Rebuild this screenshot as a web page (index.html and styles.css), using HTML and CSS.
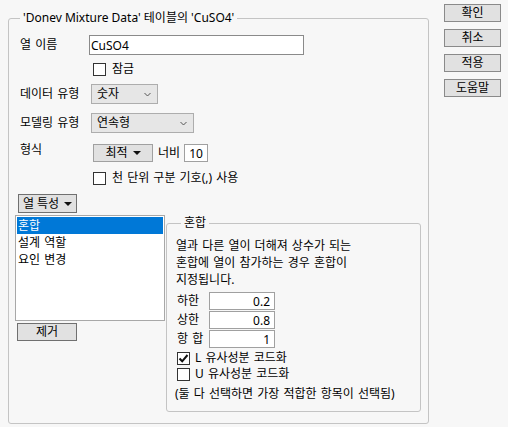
FILE: index.html
```html
<!DOCTYPE html>
<html lang="ko">
<head>
    <meta charset="UTF-8">
    <title>열 정보</title>
    <link rel="stylesheet" href="styles.css">
</head>
<body>
    <div class="dialog">
        <fieldset class="main">
            <legend>'Donev Mixture Data' 테이블의 'CuSO4'</legend>

            <div class="row row-name">
                <span class="label">열 이름</span>
                <input class="text-input name-input" type="text" value="CuSO4">
            </div>
            <div class="row row-lock">
                <span class="label"></span>
                <label class="check"><span class="box"></span>잠금</label>
            </div>
            <div class="row row-type">
                <span class="label">데이터 유형</span>
                <div class="select sel-data">숫자<span class="chev"><svg width="7" height="5" viewBox="0 0 7 5"><path d="M0.5 1 L3.5 4 L6.5 1" fill="none" stroke="#555" stroke-width="1"/></svg></span></div>
            </div>
            <div class="row row-model">
                <span class="label">모델링 유형</span>
                <div class="select sel-model">연속형<span class="chev"><svg width="7" height="5" viewBox="0 0 7 5"><path d="M0.5 1 L3.5 4 L6.5 1" fill="none" stroke="#555" stroke-width="1"/></svg></span></div>
            </div>
            <div class="row row-format">
                <span class="label label-top">형식</span>
                <button class="btn drop-btn fmt-btn">최적 <span class="tri"></span></button>
                <span class="width-label">너비</span>
                <input class="text-input width-input" type="text" value="10">
            </div>
            <div class="row row-sep">
                <span class="label"></span>
                <label class="check"><span class="box"></span>천 단위 구분 기호(,) 사용</label>
            </div>

            <button class="btn drop-btn prop-btn">열 특성 <span class="tri"></span></button>

            <div class="props">
                <div class="prop-side">
                    <ul class="prop-list">
                        <li class="selected">혼합</li>
                        <li>설계 역할</li>
                        <li>요인 변경</li>
                    </ul>
                    <button class="btn remove-btn">제거</button>
                </div>

                <fieldset class="mix">
                    <legend>혼합</legend>
                    <p class="mix-desc">열과 다른 열이 더해져 상수가 되는<br>혼합에 열이 참가하는 경우 혼합이<br>지정됩니다.</p>
                    <div class="limits">
                        <span>하한</span><input class="num-input" type="text" value="0.2">
                        <span>상한</span><input class="num-input" type="text" value="0.8">
                        <span>항 합</span><input class="num-input" type="text" value="1">
                    </div>
                    <label class="check mix-check"><span class="box checked"><svg width="11" height="11" viewBox="0 0 11 11"><path d="M1.5 5.5 L4.2 8.3 L9.5 2" fill="none" stroke="#111" stroke-width="2"/></svg></span>L 유사성분 코드화</label>
                    <label class="check mix-check"><span class="box"></span>U 유사성분 코드화</label>
                    <p class="mix-note">(둘 다 선택하면 가장 적합한 항목이 선택됨)</p>
                </fieldset>
            </div>
        </fieldset>

        <div class="actions">
            <button class="btn act-btn">확인</button>
            <button class="btn act-btn">취소</button>
            <button class="btn act-btn">적용</button>
            <button class="btn act-btn">도움말</button>
        </div>
    </div>
</body>
</html>
```

FILE: styles.css
```css
* {
    box-sizing: border-box;
    margin: 0;
    padding: 0;
}

body {
    font-family: "Noto Sans", "Noto Sans CJK KR", sans-serif;
    font-size: 12px;
    line-height: 16px;
    word-spacing: 1px;
    color: #000;
    background: #f7f7f7;
    width: 508px;
    height: 427px;
    overflow: hidden;
}

.dialog {
    display: flex;
    align-items: flex-start;
    padding: 10px 0 0 8px;
}

fieldset {
    border: 1px solid #c4c4c4;
    border-radius: 3px;
}

legend {
    padding: 0 3px;
    margin-left: 5px;
    line-height: 16px;
    word-spacing: 0;
}

.main {
    width: 421px;
    height: 414px;
    padding: 9px 7px 0 6px;
}

.actions {
    display: flex;
    flex-direction: column;
    gap: 7px;
    margin: -6px 0 0 15px;
}

.btn {
    font: inherit;
    color: #000;
    background: #e1e1e1;
    border: 1px solid #8a8a8a;
    line-height: 16px;
    cursor: default;
}

.act-btn {
    width: 57px;
    height: 18px;
}

.row {
    display: flex;
    align-items: center;
    padding-left: 5px;
}

.label {
    width: 69px;
    flex-shrink: 0;
}

.row-name { height: 20px; }
.row-lock { height: 16px; margin-top: 6px; }
.row-type { height: 20px; margin-top: 7px; }
.row-model { height: 20px; margin-top: 9px; }
.row-format { height: 18px; margin-top: 11px; }
.row-sep { height: 16px; margin-top: 8px; }

.label-top {
    align-self: flex-start;
    margin-top: -2px;
}

.text-input {
    font: inherit;
    color: #000;
    background: #fff;
    border: 1px solid #8a8a8a;
    outline: none;
}

.name-input {
    width: 215px;
    height: 20px;
    padding: 0 1px;
}

.check {
    display: flex;
    align-items: center;
    gap: 6px;
    margin-left: 4px;
}

.box {
    width: 13px;
    height: 13px;
    background: #fff;
    border: 1px solid #333;
    display: flex;
    align-items: center;
    justify-content: center;
    flex-shrink: 0;
}

.select {
    display: flex;
    align-items: center;
    height: 20px;
    margin-left: 2px;
    padding-left: 5px;
    background: #e6e6e6;
    border: 1px solid #adadad;
    position: relative;
}

.sel-data { width: 67px; }
.sel-model { width: 103px; }

.chev {
    position: absolute;
    right: 6px;
    top: 7px;
    display: flex;
}

.drop-btn {
    display: flex;
    align-items: center;
    justify-content: center;
    gap: 5px;
}

.tri {
    width: 0;
    height: 0;
    border-left: 4px solid transparent;
    border-right: 4px solid transparent;
    border-top: 4px solid #111;
}

.fmt-btn {
    width: 60px;
    height: 18px;
    margin-left: 4px;
    border-color: #a0a0a0;
}

.width-label {
    margin: 0 4px 0 5px;
}

.width-input {
    width: 24px;
    height: 18px;
    text-align: center;
    border-color: #a0a0a0;
}

.prop-btn {
    width: 59px;
    height: 19px;
    margin: 8px 0 0 3px;
    border-color: #707070;
}

.props {
    display: flex;
    align-items: flex-start;
    margin-top: 2px;
}

.prop-side {
    width: 150px;
    flex-shrink: 0;
}

.prop-list {
    list-style: none;
    height: 106px;
    background: #fff;
    border: 1px solid #a8a8a8;
    padding: 1px;
}

.prop-list li {
    height: 17px;
    line-height: 17px;
    padding-left: 1px;
}

.prop-list li.selected {
    background: #0078d7;
    color: #fff;
}

.remove-btn {
    width: 60px;
    height: 18px;
    margin: 2px 0 0 2px;
    border-color: #707070;
}

.mix {
    width: 255px;
    height: 197px;
    margin-left: 1px;
    padding: 6px 8px 0 9px;
}

.mix-desc {
    line-height: 17px;
}

.limits {
    display: grid;
    grid-template-columns: 33px 66px;
    row-gap: 1px;
    align-items: center;
    margin-top: 4px;
}

.limits span {
    padding-left: 1px;
}

.num-input {
    font: inherit;
    height: 18px;
    background: #fff;
    border: 1px solid #a0a0a0;
    text-align: right;
    padding-right: 4px;
    outline: none;
}

.mix-check {
    margin: 3px 0 0 1px;
    gap: 5px;
    height: 14px;
}

.mix-check + .mix-check {
    margin-top: 2px;
}

.mix-note {
    margin-top: 5px;
    margin-left: -1px;
}
```
